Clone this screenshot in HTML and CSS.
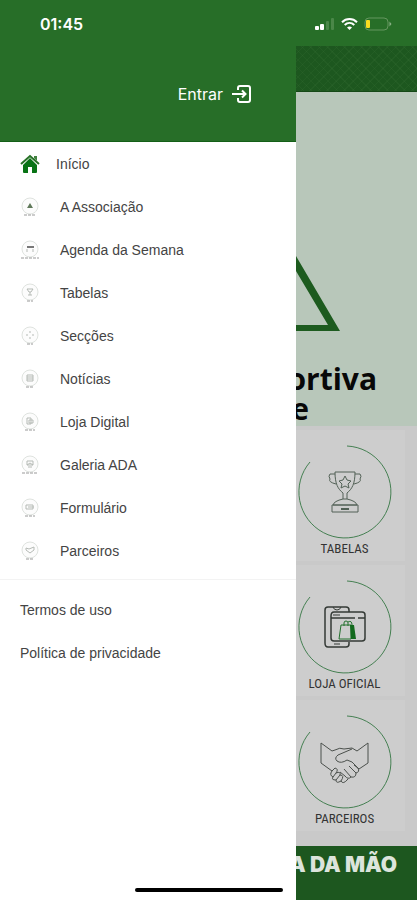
FILE: index.html
```html
<!DOCTYPE html>
<html lang="pt">
<head>
    <meta charset="UTF-8">
    <meta name="viewport" content="width=device-width, initial-scale=1.0">
    <title>Menu</title>
    <link rel="stylesheet" href="styles.css">
</head>
<body>
    <!-- Status bar -->
    <header class="status-bar">
        <span class="time">01:45</span>
        <div class="status-icons">
            <svg width="20" height="12" viewBox="0 0 20 12" aria-hidden="true">
                <rect x="0" y="8" width="4" height="4" rx="1" fill="#fff"/>
                <rect x="5" y="6" width="4" height="6" rx="1" fill="#fff"/>
                <rect x="11" y="3" width="3" height="9" rx="1" fill="#4a8748"/>
                <rect x="16" y="0" width="3" height="12" rx="1" fill="#4a8748"/>
            </svg>
            <svg width="17" height="12" viewBox="0 0 17 12" fill="none" stroke="#fff" stroke-width="2" aria-hidden="true">
                <path d="M1 4.2C5.200 0 11.800 0 16 4.200"/>
                <path d="M3.700 7C6.500 4.400 10.500 4.400 13.300 7"/>
                <path d="M8.500 12L6 9.400C7.500 8.100 9.500 8.100 11 9.400Z" fill="#fff" stroke="none"/>
            </svg>
            <svg width="28" height="14" viewBox="0 0 28 14" aria-hidden="true">
                <rect x="1" y="1" width="23" height="12" rx="4" fill="none" stroke="#65965f"/>
                <rect x="2" y="3" width="4" height="8" rx="1" fill="#fbdc20"/>
                <path d="M25.500 4.500L27.500 7L25.500 9.500Z" fill="#8db389"/>
            </svg>
        </div>
    </header>

    <div class="screen">
        <!-- Side menu -->
        <aside class="drawer">
            <div class="drawer-header">
                <button class="login-btn" type="button">
                    Entrar
                    <svg width="20" height="18" viewBox="0 0 20 18" fill="none" stroke="#fff" stroke-width="2" aria-hidden="true">
                        <path d="M6 5V3Q6 1 8 1H16Q18 1 18 3V15Q18 17 16 17H8Q6 17 6 15V13"/>
                        <path d="M0 9H13M10 5.500L13.500 9L10 12.500"/>
                    </svg>
                </button>
            </div>

            <nav class="menu">
                <a class="menu-item home" href="#">
                    <svg width="20" height="20" viewBox="0 0 20 20" aria-hidden="true">
                        <path d="M14 2H17V7L14 4Z" fill="#42823f"/>
                        <path d="M10 4L17 11V18Q17 19 16 19H12V13H8V19H4Q3 19 3 18V11Z" fill="#087315"/>
                        <path d="M1 10L10 2L19 10" fill="none" stroke="#287127" stroke-width="2"/>
                    </svg>
                    <span>Início</span>
                </a>
                <a class="menu-item" href="#">
                    <svg width="20" height="20" viewBox="0 0 20 20" aria-hidden="true">
                        <circle class="badge" cx="10" cy="9" r="8"/>
                        <path d="M10 6L13 11H7Z" fill="#60795a"/>
                        <path class="caption" d="M4 18H16"/>
                    </svg>
                    <span>A Associação</span>
                </a>
                <a class="menu-item" href="#">
                    <svg width="20" height="20" viewBox="0 0 20 20" aria-hidden="true">
                        <circle class="badge" cx="10" cy="9" r="8"/>
                        <path d="M7 7H14" stroke="#777" stroke-width="2"/>
                        <path class="mark" d="M7 9V12M13 9V12"/>
                        <path class="caption" d="M1 18H19"/>
                    </svg>
                    <span>Agenda da Semana</span>
                </a>
                <a class="menu-item" href="#">
                    <svg width="20" height="20" viewBox="0 0 20 20" aria-hidden="true">
                        <circle class="badge" cx="10" cy="9" r="8"/>
                        <path class="mark" d="M7 6H13L11 9H9ZM10 9V12M8 12H12"/>
                        <path class="caption" d="M7 18H13"/>
                    </svg>
                    <span>Tabelas</span>
                </a>
                <a class="menu-item" href="#">
                    <svg width="20" height="20" viewBox="0 0 20 20" aria-hidden="true">
                        <circle class="badge" cx="10" cy="9" r="8"/>
                        <path class="mark" d="M10 5V7M10 11V13M6 9H8M12 9H14"/>
                        <path class="caption" d="M7 18H13"/>
                    </svg>
                    <span>Secções</span>
                </a>
                <a class="menu-item" href="#">
                    <svg width="20" height="20" viewBox="0 0 20 20" aria-hidden="true">
                        <circle class="badge" cx="10" cy="9" r="8"/>
                        <path class="mark" d="M7 6H13V12H7ZM7 8H13M7 10H13"/>
                        <path class="caption" d="M6 18H14"/>
                    </svg>
                    <span>Notícias</span>
                </a>
                <a class="menu-item" href="#">
                    <svg width="20" height="20" viewBox="0 0 20 20" aria-hidden="true">
                        <circle class="badge" cx="10" cy="9" r="8"/>
                        <path class="mark" d="M7 6H11V12H7ZM9 8H13V11H9Z"/>
                        <path class="caption" d="M5 18H15"/>
                    </svg>
                    <span>Loja Digital</span>
                </a>
                <a class="menu-item" href="#">
                    <svg width="20" height="20" viewBox="0 0 20 20" aria-hidden="true">
                        <circle class="badge" cx="10" cy="9" r="8"/>
                        <path class="mark" d="M7 6H13V10H7ZM7 10L10 8L13 10M8 12H12"/>
                        <path class="caption" d="M2 18H18"/>
                    </svg>
                    <span>Galeria ADA</span>
                </a>
                <a class="menu-item" href="#">
                    <svg width="20" height="20" viewBox="0 0 20 20" aria-hidden="true">
                        <circle class="badge" cx="10" cy="9" r="8"/>
                        <path class="mark" d="M6 7H13V11H6ZM8 9H14"/>
                        <path class="caption" d="M5 18H15"/>
                    </svg>
                    <span>Formulário</span>
                </a>
                <a class="menu-item" href="#">
                    <svg width="20" height="20" viewBox="0 0 20 20" aria-hidden="true">
                        <circle class="badge" cx="10" cy="9" r="8"/>
                        <path class="mark" d="M6 7L9 8L14 6V9L10 12L6 9Z"/>
                        <path class="caption" d="M6 18H14"/>
                    </svg>
                    <span>Parceiros</span>
                </a>
            </nav>

            <nav class="legal">
                <a href="#">Termos de uso</a>
                <a href="#">Política de privacidade</a>
            </nav>
        </aside>

        <!-- Home page, visible next to the menu -->
        <main class="page">
            <div class="pattern"></div>

            <section class="hero">
                <svg class="emblem" width="44" height="76" viewBox="0 0 44 76" aria-hidden="true">
                    <path d="M0 1L44 76H0V70H32L0 16Z" fill="#1d5b1f"/>
                </svg>
                <h1>
                    <span class="name">ortiva</span>
                    <span class="place">e</span>
                </h1>
            </section>

            <section class="tiles">
                <a class="tile" href="#">
                    <svg width="94" height="94" viewBox="0 0 94 94" fill="none" aria-hidden="true">
                        <path class="ring" d="M49 1A46 46 0 1 1 12 17"/>
                        <g stroke="#526156">
                            <path d="M37 27H57C57 39 54 44 49 48V54H45V48C40 44 37 39 37 27Z"/>
                            <path d="M37 29H32Q30 31 32 34Q30 37 38 39M57 29H62Q64 31 62 34Q64 37 56 39"/>
                            <path d="M47 31L49 35L53 36L50 39L51 43L47 41L43 43L44 39L41 36L45 35Z"/>
                            <path d="M45 54Q36 56 35 60H59Q58 56 49 54M34 60H60V67H34Z"/>
                            <path d="M43 64H51" stroke-width="2"/>
                        </g>
                    </svg>
                    <span>TABELAS</span>
                </a>
                <a class="tile" href="#">
                    <svg width="94" height="94" viewBox="0 0 94 94" fill="none" aria-hidden="true">
                        <path class="ring" d="M49 1A46 46 0 1 1 12 17"/>
                        <g stroke="#343a36">
                            <path d="M51 32V30Q51 27 48 27H30Q27 27 27 30V63Q27 67 30 67H48Q51 67 51 64V62" stroke-width="1.500"/>
                            <path d="M35 27Q36 30 39 30T43 27M36 64H42"/>
                            <path d="M67 35V58Q67 61 64 61H36Q33 61 33 58V36Q33 32 36 32H64Q67 32 67 35ZM33 38H57M60 38H67" stroke-width="1.500"/>
                            <path d="M35 35H42"/>
                        </g>
                        <path d="M43 45L41 59H53V45ZM46 46V43Q46 41 48 41T50 43V46M50 42Q54 40 54 45" stroke="#23702d"/>
                        <path d="M52 45H56L58 59H53Z" fill="#12691d"/>
                    </svg>
                    <span>LOJA OFICIAL</span>
                </a>
                <a class="tile" href="#">
                    <svg width="94" height="94" viewBox="0 0 94 94" fill="none" aria-hidden="true">
                        <path class="ring" d="M49 1A46 46 0 1 1 12 17"/>
                        <g stroke="#4b504c">
                            <path d="M23 28L34 36L37 35Q42 32 46 34L54 33L59 36L70 28V48L61 54L56 50"/>
                            <path d="M23 28V48L34 56"/>
                            <path d="M54 34L40 40Q36 43 39 46Q43 49 49 45L54 47L60 53Q62 57 58 58L51 51"/>
                            <path d="M58 58Q58 63 53 62L46 54M53 62Q50 65 47 61L42 57"/>
                            <path d="M34 56Q31 60 35 62Q33 65 38 65Q38 69 43 66Q45 70 50 64"/>
                            <path d="M34 56L37 53Q41 54 38 58L35 62M38 58Q43 56 42 60L38 65M42 60Q47 60 43 66"/>
                        </g>
                    </svg>
                    <span>PARCEIROS</span>
                </a>
            </section>

            <footer class="slogan"><span>A DA MÃO</span></footer>
        </main>
    </div>

    <div class="home-indicator"></div>
</body>
</html>
```

FILE: styles.css
```css
/* General Reset */
* {
    margin: 0;
    padding: 0;
    box-sizing: border-box;
}

body {
    position: relative;
    display: flex;
    flex-direction: column;
    min-height: 100vh;
    font-family: "Liberation Sans", Arial, sans-serif;
    font-size: 14px;
    line-height: 20px;
    color: #444;
    background-color: #fff;
}

a {
    color: inherit;
    text-decoration: none;
}

svg {
    flex-shrink: 0;
}

/* Status bar */
.status-bar {
    display: flex;
    justify-content: space-between;
    align-items: center;
    height: 46px;
    padding: 2px 25px 0 40px;
    background-color: #276e28;
    color: #fff;
}

.time {
    font-family: Inter, sans-serif;
    font-size: 16px;
    font-weight: 600;
}

.status-icons {
    display: flex;
    align-items: center;
    gap: 6px;
}

.screen {
    display: flex;
    flex: 1;
}

/* Side menu */
.drawer {
    flex: 0 0 71%;
    background-color: #fff;
}

.drawer-header {
    display: flex;
    justify-content: flex-end;
    align-items: center;
    height: 96px;
    padding-right: 44px;
    background-color: #276e28;
    border-bottom: 1px solid #145f17;
}

.login-btn {
    display: flex;
    align-items: center;
    gap: 9px;
    border: none;
    background: none;
    color: #fff;
    font-family: Inter, sans-serif;
    font-size: 16px;
    line-height: 20px;
    cursor: pointer;
}

.menu {
    padding-bottom: 7px;
    border-bottom: 1px solid #f3f3f3;
}

.menu-item {
    display: flex;
    align-items: center;
    gap: 20px;
    height: 43px;
    padding-left: 20px;
}

.menu-item.home {
    gap: 16px;
}

.menu-item:hover,
.legal a:hover {
    background-color: #f5f5f5;
}

.badge {
    fill: #fcfcfc;
    stroke: #dfe3df;
}

.mark {
    fill: none;
    stroke: #b5bab5;
}

.caption {
    stroke: #999;
    stroke-dasharray: 3 1;
}

.legal {
    padding-top: 8px;
}

.legal a {
    display: flex;
    align-items: center;
    height: 43px;
    padding-left: 20px;
}

/* Page beside the menu */
.page {
    display: flex;
    flex-direction: column;
    flex: 1;
    min-width: 0;
    overflow: hidden;
    background-color: #c9c9c9;
}

.pattern {
    height: 46px;
    background-color: #1d571f;
    background-image:
        repeating-linear-gradient(45deg, transparent 0 5px, rgba(70, 125, 65, 0.15) 5px 6px),
        repeating-linear-gradient(135deg, transparent 0 5px, rgba(70, 125, 65, 0.15) 5px 6px);
    border-bottom: 1px solid #154917;
}

.hero {
    height: 334px;
    padding-top: 163px;
    background-color: #b8c7ba;
}

.emblem {
    display: block;
}

.hero h1 {
    padding-top: 33px;
    font-family: "Open Sans", sans-serif;
    font-size: 30px;
    font-weight: 700;
    line-height: 30px;
    color: #080808;
}

.name,
.place {
    display: flex;
    justify-content: flex-end;
}

.name {
    padding-right: 40px;
}

.place {
    padding-right: 108px;
}

/* Tiles */
.tiles {
    display: flex;
    flex-direction: column;
    gap: 4px;
    padding: 4px 12px 15px 0;
}

.tile {
    display: flex;
    flex-direction: column;
    align-items: center;
    height: 131px;
    padding: 15px 12px 0 0;
    background-color: #cdcdcd;
    font-family: "Liberation Sans Narrow", "Roboto Condensed", Roboto, sans-serif;
    font-size: 13px;
    color: #333;
    white-space: nowrap;
}

.ring {
    stroke: #458052;
    stroke-width: 1;
}

/* Bottom banner */
.slogan {
    display: flex;
    justify-content: flex-end;
    flex: 1;
    padding: 9px 20px 20px 0;
    background-color: #1d571f;
    color: #dce4dc;
    font-family: Inter, sans-serif;
    font-size: 21px;
    font-weight: 900;
    white-space: nowrap;
}

.home-indicator {
    position: absolute;
    bottom: 8px;
    left: 50%;
    width: 148px;
    height: 4px;
    border-radius: 2px;
    background-color: #000;
    transform: translateX(-50%);
}
```
